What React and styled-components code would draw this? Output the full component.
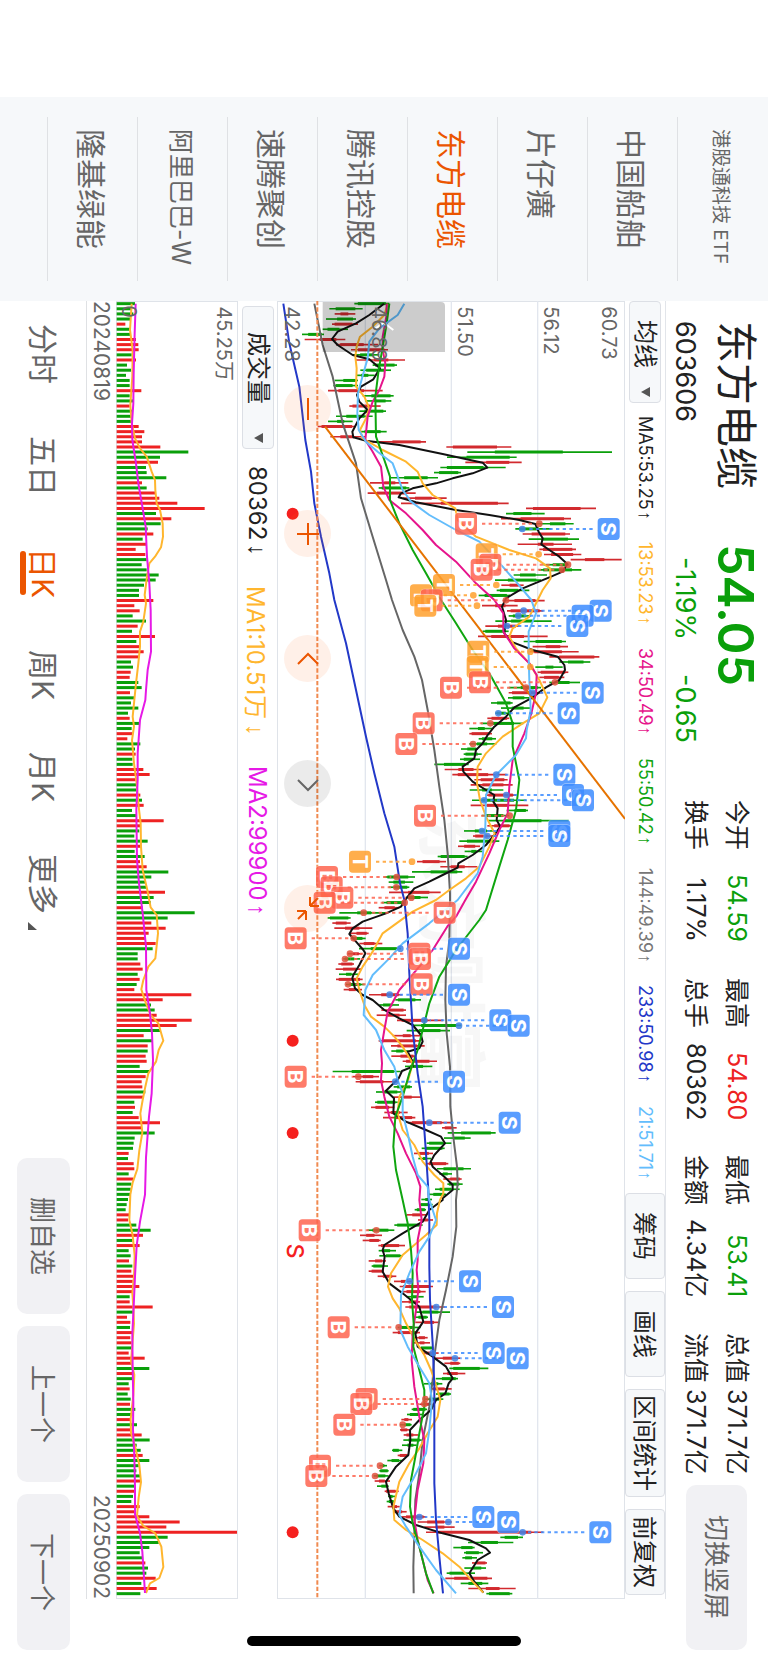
import React, { useState } from 'react'
import styled, { createGlobalStyle, css } from 'styled-components'

const UP = '#ee2222'
const DOWN = '#0a9f0a'
const ORANGE = '#eb5500'

const GlobalStyle = createGlobalStyle`
  * { box-sizing: border-box; }
  body {
    margin: 0;
    background: #fff;
    color: #222;
    font-family: Inter, "Noto Sans CJK SC", sans-serif;
  }
  button, select {
    font-family: inherit;
    writing-mode: inherit;
    text-orientation: inherit;
    margin: 0;
    padding: 0;
  }
`

/* the app is held sideways: inline runs down the screen, blocks run right to left */
const Screen = styled.div`
  position: relative;
  display: flex;
  width: 100vw;
  height: 100vh;
  padding-inline-start: 97px;
  overflow: hidden;
  writing-mode: vertical-rl;
  text-orientation: sideways;
  white-space: nowrap;
`

const WatchList = styled.nav`
  flex: 0 0 204px;
  padding-inline: 20px;
  padding-block-start: 1px;
  background: #f6f8fa;
`

const WatchItem = styled.a`
  display: flex;
  align-items: center;
  block-size: 90px;
  padding-inline-start: 12px;
  border-block-end: 1px solid #dfe1e4;
  color: ${(p) => (p.$active ? ORANGE : '#666')};
  font-size: ${(p) => p.$size || 30}px;
  text-decoration: none;
`

const Main = styled.main`
  display: flex;
  flex-direction: column;
  flex: 1;
  min-inline-size: 0;
`

const Header = styled.header`
  display: flex;
  block-size: 102px;
  padding-inline: 20px 13px;
`

const HeadColumn = styled.div`
  flex: 0 0 ${(p) => p.$size}px;
  display: flex;
  flex-direction: column;
  gap: 8px;
  padding-block-start: 7px;
`

const StockName = styled.h1`
  margin: 0;
  font-size: 42px;
  font-weight: 400;
  line-height: 50px;
`

const Price = styled.div`
  color: ${DOWN};
  font-size: 50px;
  font-weight: 600;
  line-height: 50px;
`

const SubLine = styled.div`
  display: flex;
  gap: 34px;
  padding-inline-start: ${(p) => p.$indent || 0}px;
  color: ${(p) => p.$color || '#222'};
  font-size: 27px;
  line-height: 36px;
`

const Stats = styled.dl`
  flex: 1;
  display: grid;
  grid-template-columns: repeat(4, 1fr);
  grid-auto-rows: 36px;
  gap: 5px 35px;
  align-content: start;
  margin: 0;
  padding-block-start: 13px;
`

const Stat = styled.div`
  display: flex;
  justify-content: space-between;
  font-size: 25px;
  line-height: 36px;
  dd {
    margin: 0;
    color: ${(p) => p.$color || '#222'};
  }
`

const GreyButton = styled.button`
  flex: none;
  inline-size: ${(p) => p.$size}px;
  block-size: ${(p) => p.$block}px;
  padding-block-end: 3px;
  border: 0;
  border-radius: 10px;
  background: #f1f1f4;
  color: #666;
  font-size: 26px;
`

const SwitchButton = styled(GreyButton)`
  margin-block-start: 21px;
  margin-inline-start: 10px;
`

const barFrame = css`
  margin-inline-end: 64px;
  display: flex;
  align-items: center;
`

const AverageBar = styled.div`
  ${barFrame}
  block-size: 41px;
  border-block-start: 1px solid #e2e5ea;
`

const VolumeBar = styled.div`
  ${barFrame}
  block-size: 39px;
  padding-inline-start: 5px;
  font-size: 24px;
`

const Picker = styled.label`
  position: relative;
  flex: none;
  inline-size: ${(p) => p.$size}px;
  block-size: 32px;
  select {
    appearance: none;
    inline-size: 100%;
    block-size: 100%;
    padding-inline-start: ${(p) => p.$pad}px;
    border: 1px solid #dcdfe5;
    border-radius: 4px;
    background: #f6f8fa;
    color: #222;
    font-size: 24px;
    line-height: 30px;
  }
  svg {
    position: absolute;
    inset-block-start: 11px;
    inset-inline-end: 6px;
    width: 9px;
    height: 10px;
    pointer-events: none;
  }
`

const Averages = styled.div`
  flex: 1;
  display: flex;
  justify-content: space-between;
  padding-inline: 13px;
  font-size: 18px;
`

const Average = styled.span`
  color: ${(p) => p.$color};
`

const Arrow = styled.span`
  margin-inline-start: ${(p) => p.$gap || 0}px;
  font-family: "Liberation Sans", sans-serif;
`

const Tools = styled.div`
  display: flex;
  gap: 12px;
  padding-inline-end: 4px;
`

const ToolButton = styled.button`
  min-inline-size: 86px;
  block-size: 40px;
  padding-inline: 5px;
  padding-block-end: 3px;
  border: 1px solid #dcdfe5;
  border-radius: 4px;
  background: #f6f8fa;
  color: #222;
  font-size: 24px;
`

const VolumeText = styled.span`
  margin-inline-start: ${(p) => p.$gap}px;
  color: ${(p) => p.$color};
`

const Panel = styled.section`
  position: relative;
  block-size: ${(p) => p.$block}px;
  margin-inline-end: 64px;
  border: 1px solid #dfe3e9;
  > svg {
    position: absolute;
    inset: -1px;
    width: calc(100% + 2px);
    height: calc(100% + 2px);
    writing-mode: horizontal-tb;
    text-orientation: mixed;
  }
`

const ChartControls = styled.div`
  position: absolute;
  inset-block-end: 6px;
  inset-inline-start: 83px;
  display: flex;
  gap: 78px;
`

const RoundButton = styled.button`
  display: flex;
  align-items: center;
  justify-content: center;
  inline-size: 47px;
  block-size: 47px;
  border: 0;
  border-radius: 50%;
  background: ${(p) => (p.$muted ? 'rgba(0, 0, 0, 0.08)' : 'rgba(255, 110, 30, 0.1)')};
  svg {
    width: 24px;
    height: 24px;
    fill: none;
    stroke: ${(p) => (p.$muted ? '#666' : ORANGE)};
    stroke-width: 2;
  }
`

const Dates = styled.div`
  display: flex;
  justify-content: space-between;
  align-items: center;
  block-size: 30px;
  margin-inline-end: 64px;
  border-block-end: 1px solid #dfe1e4;
  color: #666;
  font-size: 21px;
`

const Footer = styled.footer`
  flex: 1;
  display: flex;
  align-items: center;
  justify-content: space-between;
  padding-inline: 23px 13px;
`

const Periods = styled.div`
  display: flex;
  gap: 52px;
`

const Period = styled.button`
  position: relative;
  border: 0;
  background: none;
  color: ${(p) => (p.$active ? ORANGE : '#666')};
  font-size: 30px;
  line-height: 34px;
  ${(p) => p.$active && css`
    &::after {
      content: '';
      position: absolute;
      inset-block-end: -6px;
      inset-inline: 3px;
      block-size: 6px;
      border-radius: 3px;
      background: ${ORANGE};
    }
  `}
  svg {
    position: absolute;
    inset-block-end: 2px;
    inset-inline-end: -16px;
    width: 9px;
    height: 8px;
  }
`

const FooterActions = styled.div`
  display: flex;
  gap: 12px;
`

const HomeIndicator = styled.div`
  position: absolute;
  inset-inline-end: 17px;
  inset-block: 247px;
  inline-size: 10px;
  border-radius: 5px;
  background: #000;
`

const WATCH = [
  ['港股通科技 ETF', 19], ['中国船舶'], ['片仔癀'], ['东方电缆'],
  ['腾讯控股'], ['速腾聚创'], ['阿里巴巴-W', 25], ['隆基绿能'],
]

const STATS = [
  ['今开', '54.59', DOWN], ['最高', '54.80', UP], ['最低', '53.41', DOWN], ['总值', '371.7亿'],
  ['换手', '1.17%'], ['总手', '80362'], ['金额', '4.34亿'], ['流值', '371.7亿'],
]

const AVERAGES = [
  ['MA5:53.25', '#222'], ['13:53.23', '#ffb62e'], ['34:50.49', '#e6148c'], ['55:50.42', '#0fa50f'],
  ['144:49.39', '#777'], ['233:50.98', '#2238c8'], ['21:51.71', '#63bdfc'],
]

// chart units are a third of a pixel; rows are one trading day apart
const TOP = 903
const LENGTH = 3894
const dayY = (i) => 911 + i * 15.357

const CANDLES = `
g295-400 g220-320 r236-298 g210-300 r228-306 g200-276 g138-204 r146-268 r240-366 r285-396
g290-370 r300-447 g350-423 g313-405 g300-356 g236-306 g232-306 r216-380 g320-413 g328-406
r280-374 g310-390 g240-350 g216-290 r185-300 g310-392 r223-330 r350-510 r571-766 g634-1068
g573-782 r628-797 g553-749 g534-615 g405-546 r342-457 g368-460 r335-479 r440-572 r435-758
r810-1020 g750-866 r735-945 g840-953 g778-886 r800-942 g818-969 r785-948 r850-960 r864-976
r944-1097 g862-938 g849-976 g773-873 g717-855 r736-803 g722-820 g668-762 r740-866 r678-785
r753-862 g758-824 g718-887 r688-790 g680-758 r666-875 g803-930 r830-936 r820-968 r880-1030
g910-1003 g838-920 r845-937 r850-925 g880-972 g758-855 r758-860 g756-830 g705-770 g735-822
g718-765 r694-760 g675-802 g640-710 r640-708 g668-720 g640-721 g615-666 g623-677 g612-672
g535-638 r566-677 r589-752 r655-755 r644-770 g641-742 r688-780 g648-810 r644-817 g752-816
g678-760 g698-938 r694-768 g624-712 r651-718 g610-730 r606-672 g626-680 g545-635 r483-570
r553-664 g468-619 g385-477 g398-472 g398-460 r399-554 g450-516 g378-450 r368-430 g250-395
g215-284 r229-284 r235-349 r280-338 g285-329 r310-379 g309-435 r275-318 g262-312 r247-294
r239-318 g249-306 r240-320 g270-326 r263-318 r339-438 g418-495 g370-429 r376-450 r362-450
r423-561 g467-616 g452-582 r410-492 r368-492 r405-506 g406-458 r406-480 r440-543 g447-529
g230-434 r291-369 r299-425 g413-468 g360-442 r413-495 g357-425 r345-415 r385-455 r381-478
r455-586 r558-602 g575-719 g564-644 g512-586 g497-566 r474-531 g487-525 r512-577 g543-645
g550-588 r562-617 g574-620 g537-611 g517-570 g496-528 g490-530 g476-510 r452-512 r486-531
g415-500 g334-415 r312-378 r320-374 r367-447 g368-420 g370-440 r338-390 g347-396 r338-384
r365-421 r414-470 r431-531 r438-509 g452-503 r438-492 r448-568 g480-582 g476-516 r478-550
g425-494 r410-492 r478-515 r473-522 g490-532 r500-548 r540-613 r565-613 g580-697 r561-628
g539-606 g504-559 r525-587 g540-585 g505-562 r490-535 g467-513 g453-498 r436-468 g432-467
r432-460 r443-487 g442-497 g438-482 g408-439 r425-458 g394-439 g370-393 g370-398 g353-398
r356-402 g363-398 r386-428 g396-417 g392-415 r395-431 r412-452 r436-510 r485-587 r505-596
r510-861 g733-801 g636-772 g592-656 g624-681 g619-663 r648-693 g625-690 g572-657 r568-708
g614-697 r637-779 g691-769`.trim().split(/\s+/).map((s) => {
  const [low, high] = s.slice(1).split('-').map(Number)
  return { up: s[0] === 'r', low, high }
})

const VOLUMES = `
g405 g395 g400 g393 r376 g390 g390 r408 r415 r416 g395 r408 g381 g393 g378 g389 g389 r424 g389 g399
r389 g397 g395 g397 r416 r433 r426 r426 r481 g565 g480 r474 g438 g440 g499 r426 g440 r468 r478 r532
r614 g468 r514 g482 g443 r460 g428 r440 r407 r436 g440 g425 g440 g476 g467 g432 g417 g417 r460 r403
r419 g398 g438 r413 g396 r465 g409 r420 r431 r418 g393 g399 r392 r389 g415 g425 r390 g402 g393 g415
g384 r389 g420 g395 r398 r382 g421 g405 r407 g397 g398 r430 r449 r407 g410 g410 r421 g426 r431 g396
g408 r491 r420 g418 g403 g443 r424 g404 g434 r420 r440 g505 g454 g438 g438 r495 g461 g452 r428 g584
g503 r454 r497 r446 r437 r467 g458 g413 g413 r421 r428 g413 r419 g410 r403 r574 r488 g453 g464 r470
r575 r530 g483 r431 g458 r443 g443 r437 r440 g419 g448 r437 r425 r427 g436 r432 g403 r405 g398 r416
r480 r424 g464 g404 g401 g399 r386 g384 r401 r403 g386 r400 g394 g392 g392 g384 g380 g377 r388 r384
g409 g452 r429 g397 r419 g386 g392 r387 g397 r394 r400 r398 r418 r396 g389 r389 r458 g401 r381 r391
g390 r398 r391 r395 g396 r386 r434 r396 g448 r399 g398 g386 r389 g383 g392 r390 g406 g397 r392 g411
r393 r425 g449 g410 g422 r428 g448 g416 g409 g420 r420 g404 r404 g399 g394 r419 r407 r448 r539 r499
r711 g503 g476 g448 g419 g427 r436 g444 g439 r467 g424 r470 g421`.trim().split(/\s+/).map((s) => ({
  up: s[0] === 'r', end: Number(s.slice(1)),
}))

// every line is stored in screenfuls: the start of the screenful, then x,y pairs
const toPoints = (parts) => parts.map(([start, text, scale = 1]) => text.trim().split(/\s+/).map((pair) => {
  const [x, y] = pair.split(',').map(Number)
  return `${x},${Math.round(start + y * scale)}`
}).join(' ')).join(' ')

const LINES = [
  ['#666', [
    [870, '175,41 200,165 230,260 260,400 300,520 315,625 350,740 390,870'],
    [1800, '408,0 440,90 475,170 498,240 515,330 535,450 550,560 565,660 575,760 582,880'],
    [2700, '582,0 580,120 570,200 568,300 572,400 582,500 583,620 593,720 603,800 605,850'],
    [3600, '600,0 601,80 590,170 570,270 550,360 535,470 530,540 520,620 500,720 490,820 478,900 475,1000 472,1100 473,1180'],
  ]],
  ['#111', [
    [870, '384,41 340,75 300,100 245,125 228,147 245,165 290,195 340,208 372,235 352,268 315,290 303,315 310,335 335,360 310,385 289,425 292,442 330,452 430,465 560,492 680,518 694,533 650,550 590,565 540,580 470,595 435,610 428,622 480,637 600,660 700,675 790,690 838,702 848,725 860,745 856,763 880,780 910,800 934,822 920,845 880,862 800,895 750,925'],
    [1800, '738,20 750,60 745,100 765,125 830,150 905,170 925,195 927,210 910,240 870,262 825,295 775,322 750,350 715,380 695,405 680,430 660,450 655,475 620,500 622,515 650,545 690,570 715,585 712,605 725,625 722,660 733,680 715,705 690,735 650,765 607,790 605,803 560,825 520,845 475,865 455,890'],
    [2700, '448,0 435,20 390,40 320,65 290,85 280,102 300,125 322,150 328,160 310,195 292,225 289,235 297,265 320,285 350,300 385,330 430,355 470,375 495,405 500,425 490,445 455,455 470,485 470,500 438,513 428,535 390,572 414,595 412,640 450,665 510,690 555,710 567,730 535,765 524,785 530,800 570,835 590,855 590,870 560,895'],
    [3600, '560,0 520,30 500,65 440,100 385,135 380,150 386,170 380,215 400,250 440,280 490,320 502,365 478,400 485,440 530,470 570,500 590,535 578,550 568,580 540,600 525,630 490,660 462,690 463,720 457,765 420,800 390,845 398,880 412,925 430,950 480,975 560,1000 640,1020 690,1045 702,1058 665,1080 640,1120 655,1145 682,1178'],
  ]],
  ['#ffb62e', [
    [870, '395,41 385,75 350,110 312,140 302,170 298,200 302,235 300,290 325,320 340,355 330,385 312,420 320,445 380,480 450,515 485,545 500,580 530,615 598,655 605,690 660,740 760,780 840,805 882,835 884,865 860,900'],
    [1800, '845,0 820,50 770,85 760,110 780,145 820,190 850,240 874,292 850,340 800,370 740,410 690,460 665,500 663,550 672,600 690,650 716,700 700,740 670,800 630,835 580,870'],
    [2700, '540,0 470,35 380,100 350,155 320,200 302,235 310,270 325,315 345,350 385,380 415,410 440,440 470,490 455,545 430,590 425,640 440,690 475,735 500,785 535,825 562,850 562,880'],
    [3600, '552,0 543,40 542,75 510,105 440,165 405,220 396,260 410,295 430,325 450,370 480,425 505,465 525,510 540,555 553,600 545,650 515,700 490,745 460,790 430,845 412,920 415,960 450,990 500,1020 560,1060 610,1100 650,1145 682,1178'],
  ]],
  ['#e6148c', [
    [870, '392,41 392,75 380,140 380,180 388,220 385,260 370,300 350,335 335,380 328,450 350,485 375,530 382,590 400,630 450,670 500,720 540,765 600,815 660,880'],
    [1800, '715,0 742,40 742,95 775,145 820,190 842,225 840,280 826,340 805,400 770,480 760,560 755,640 730,690 700,760 660,845'],
    [2700, '628,0 600,50 575,78 530,150 490,200 430,270 395,335 385,390 375,450 378,490 375,540 385,590 400,650 425,700 450,760 480,820 493,860'],
    [3600, '490,0 497,60 485,120 485,180 482,210 487,270 480,330 470,400 467,480 475,560 490,650 505,720 502,790 485,870 475,960 485,1020 500,1080 515,1140 533,1180'],
  ]],
  ['#0fa50f', [
    [870, '400,41 392,100 382,160 368,240 358,320 360,440 385,510 402,560 402,630 430,700 470,780 510,850'],
    [1800, '555,0 600,70 650,150 700,220 750,310 770,370 770,440 790,540 780,630 755,720 730,800 690,930'],
    [2700, '670,60 600,150 550,230 520,310 500,390 485,450 460,520 440,590 418,650 412,740 420,810'],
    [3600, '440,0 455,70 465,150 470,220 468,300 473,370 472,440 490,510 505,570 505,620 490,700 480,760 465,840 462,920 470,970 490,1040 510,1120 532,1180'],
  ]],
  ['#2238c8', [
    [870, '82,41 100,160 130,290 148,450 165,545 175,640 195,740 220,850'],
    [1800, '235,0 270,130 300,270 330,410 355,520 385,640 415,740 432,850'],
    [2700, '445,0 455,100 460,220 470,390 485,520 500,620 510,760 517,870'],
    [3600, '518,0 520,60 520,200 522,300 530,430 535,560 535,700 535,850 540,960 550,1070 561,1180'],
  ]],
  ['#63bdfc', [
    [870, '445,41 425,75 370,115 340,155 335,205 318,265 306,310 304,370 308,420 330,455 365,485 410,520 425,560 440,600 465,635 520,675 600,720 670,755 740,830 780,875'],
    [1800, '826,0 840,40 818,95 818,170 820,240 824,330 812,390 810,415 780,465 720,525 690,585 688,680 680,770 665,820'],
    [2700, '605,0 520,70 440,130 400,175 350,225 328,270 323,345 360,390 385,450 415,500 425,540 440,580 440,640 455,700 470,770 485,825 515,860'],
    [3600, '520,0 540,60 520,110 490,155 460,220 435,285 433,390 455,440 490,500 520,550 528,600 520,690 510,760 470,840 440,890 430,945 450,980 490,1040 540,1110 600,1180'],
  ]],
]

const VOLUME_LINES = [
  ['#ffb62e', [
    [870, '395,41 390,120 398,180 397,260 391,345 395,400 405,445 420,475 440,500 455,545 465,570 466,600 470,640 480,660 488,700 489,740 483,772 465,800 448,820 441,860 434,915 438,940 430,995 420,1025 420,1070 415,1120 408,1180'],
    [2100, '403,0 398,50 402,80 396,120 402,190 410,250 416,320 422,370 423,440 428,510 442,570 452,622 470,645 474,700 466,775 445,800 430,840 424,868 436,905 452,945 475,970 490,1022 476,1050 468,1085 445,1120 436,1160 428,1200 421,1240'],
    [3390, '427,8 418,60 412,115 398,155 391,190 388,265 398,310 404,370 402,430 397,480 400,520 402,570 398,620 393,680 403,720 400,780 392,850 393,890 405,930 418,985 423,1035 416,1080 411,1135 430,1165 465,1185 484,1225 490,1285 478,1318 450,1333 438,1362', 1.02],
  ]],
  ['#e619e6', [
    [870, '407,41 404,130 401,250 400,340 396,400 397,450 408,520 415,580 428,655 437,710 441,800 448,880 452,960 453,1085 443,1140 438,1200'],
    [2100, '436,0 420,60 413,160 413,240 409,330 411,480 417,550 428,640 438,740 439,870 450,940 456,1000 459,1080 455,1180 447,1250'],
    [3390, '444,0 438,80 435,190 420,270 410,340 405,430 401,520 397,600 398,700 400,800 399,880 403,960 405,1050 405,1130 420,1185 427,1240 435,1362', 1.02],
  ]],
]

// kind, tag position, day, price dot
const TRADES = [
  ['S', 1058, 1587, 799], ['B', 630, 1571, 850], ['T', 692, 1663, 848], ['B', 703, 1694, 936],
  ['B', 677, 1709, 918], ['T', 564, 1755, 721], ['T', 495, 1786, 652], ['B', 527, 1801, 750],
  ['T', 508, 1817, 663], ['S', 1034, 1832, 803], ['S', 980, 1847, 787], ['S', 964, 1878, 753],
  ['T', 667, 1955, 823], ['T', 665, 2001, 823], ['B', 672, 2047, 897], ['B', 585, 2063, 810],
  ['S', 1010, 2078, 829], ['S', 938, 2140, 727], ['B', 503, 2170, 703], ['B', 451, 2232, 651],
  ['S', 925, 2324, 721], ['S', 951, 2385, 751], ['S', 981, 2401, 684], ['B', 507, 2447, 761],
  ['S', 910, 2493, 678], ['S', 910, 2508, 694], ['T', 312, 2585, 468], ['B', 213, 2631, 422],
  ['B', 227, 2662, 421], ['B', 259, 2693, 466], ['B', 206, 2708, 446], ['B', 566, 2738, 323],
  ['B', 119, 2815, 293], ['S', 609, 2846, 433], ['B', 490, 2861, 282], ['B', 492, 2877, 267],
  ['B', 497, 2953, 276], ['S', 609, 2984, 401], ['S', 733, 3061, 505], ['S', 788, 3077, 609],
  ['B', 119, 3230, 307], ['S', 594, 3245, 418], ['S', 761, 3368, 520], ['B', 161, 3691, 361],
  ['S', 642, 3844, 461], ['S', 741, 3921, 541], ['B', 248, 3982, 428], ['S', 713, 4059, 530],
  ['S', 785, 4075, 597], ['B', 332, 4197, 508], ['B', 316, 4212, 505], ['B', 265, 4274, 440],
  ['B', 192, 4397, 372], ['B', 181, 4428, 357], ['S', 682, 4551, 490], ['S', 757, 4566, 577],
  ['S', 1033, 4597, 800],
]

const TAG_COLORS = { B: '#fe6450', S: '#3d8cff', T: '#ffa02d' }
const DOT_COLORS = { B: '#e0503c', S: '#3f82e6', T: '#ffa02d' }

function SideText({ x, y, size = 60, color = '#666', anchor = 'start', weight = 400, children }) {
  return (
    <text transform={`translate(${x} ${y}) rotate(90)`} fontSize={size} fill={color} textAnchor={anchor} fontWeight={weight}>
      {children}
    </text>
  )
}

function Trade({ kind, x, y, dot }) {
  const dir = dot > x ? 1 : -1
  return (
    <g>
      <line x1={x + dir * 48} x2={dot - dir * 16} y1={y} y2={y} stroke={TAG_COLORS[kind]} strokeWidth="6" strokeDasharray="10 10" opacity="0.85" />
      <circle cx={dot} cy={y} r="10" fill={DOT_COLORS[kind]} opacity="0.85" />
      <g opacity="0.85">
        <rect x={x - 35} y={y - 35} width="70" height="70" rx="13" fill="#fff" opacity="0.5" />
        <rect x={x - 33} y={y - 33} width="66" height="66" rx="11" fill={TAG_COLORS[kind]} />
        <SideText x={x - 22} y={y} size={62} color="#fff" anchor="middle" weight={700}>{kind}</SideText>
      </g>
    </g>
  )
}

function PriceChart() {
  return (
    <svg viewBox={`63 ${TOP} 1044 ${LENGTH}`} preserveAspectRatio="none">
      {[328, 586, 845].map((x) => (
        <line key={x} x1={x} x2={x} y1={TOP} y2={TOP + LENGTH} stroke="#e2e6ee" strokeWidth="4" />
      ))}
      <SideText x={506} y={2436} size={210} color="rgba(0, 0, 0, 0.03)" weight={700}>东方财富</SideText>
      {CANDLES.map(({ up, low, high }, i) => {
        const size = high - low
        const color = up ? '#d22a2e' : DOWN
        return (
          <g key={i} stroke={color}>
            <line x1={low} x2={high} y1={dayY(i)} y2={dayY(i)} strokeWidth="5" />
            <line x1={low + size * (0.1 + (i % 4) * 0.09)} x2={high - size * (0.1 + (i % 3) * 0.12)} y1={dayY(i)} y2={dayY(i)} strokeWidth="9" />
          </g>
        )
      })}
      {LINES.map(([color, parts]) => (
        <polyline key={color} points={toPoints(parts)} fill="none" stroke={color} strokeWidth="6" strokeLinejoin="round" />
      ))}
      <line x1="207" y1="1280" x2="1107" y2="2457" stroke="#e67300" strokeWidth="6" />
      <path d="M200 906h355q12 0 12 12v138H200z" fill="rgba(0, 0, 0, 0.2)" />
      <path d="M355 988l28-20 29 22" fill="none" stroke="#fff" strokeWidth="6" />
      <line x1="184" x2="184" y1={TOP} y2={TOP + LENGTH} stroke="#f08a50" strokeWidth="6" strokeDasharray="13 6" />
      {TRADES.map(([kind, x, y, dot], i) => <Trade key={i} kind={kind} x={x} y={y} dot={dot} />)}
      {[1541, 3122, 3399, 4597].map((y) => <circle key={y} cx="110" cy={y} r="18" fill="#f5201e" />)}
      <SideText x={94} y={3753} size={70} color="#f5201e" anchor="middle" weight={500}>S</SideText>
      {[[1039, '60.73'], [865, '56.12'], [605, '51.50'], [349, '46.89'], [88, '42.28']].map(([x, label]) => (
        <SideText key={x} x={x} y={919}>{label}</SideText>
      ))}
    </svg>
  )
}

function VolumeChart() {
  return (
    <svg viewBox={`348 ${TOP} 366 ${LENGTH}`} preserveAspectRatio="none">
      {VOLUMES.map(({ up, end }, i) => (
        <line key={i} x1="350" x2={end} y1={dayY(i)} y2={dayY(i)} stroke={up ? UP : DOWN} strokeWidth="9" />
      ))}
      {VOLUME_LINES.map(([color, parts]) => (
        <polyline key={color} points={toPoints(parts)} fill="none" stroke={color} strokeWidth="6" strokeLinejoin="round" />
      ))}
      <SideText x={652} y={919}>45.25万</SideText>
      <SideText x={366} y={916}>0</SideText>
    </svg>
  )
}

const Caret = () => <svg viewBox="0 0 9 10"><path d="M9 0v10L0 5z" fill="#555" /></svg>

const CONTROLS = [
  ['缩小', 'M12 1v22'],
  ['放大', 'M12 1v22M1 12h22'],
  ['左移', 'M2 17L12 7l10 10'],
  ['右移', 'M2 8l10 10L22 8'],
  ['还原', 'M14 9h9M14 9V0M14 9l8-8M10 14H1M10 14v9M10 14l-8 8'],
]

export default function App() {
  const [period, setPeriod] = useState('日K')

  return (
    <Screen>
      <GlobalStyle />
      <WatchList>
        {WATCH.map(([name, size]) => (
          <WatchItem key={name} href="#" $size={size} $active={name === '东方电缆'}>{name}</WatchItem>
        ))}
      </WatchList>

      <Main>
        <Header>
          <HeadColumn $size={223}>
            <StockName>东方电缆</StockName>
            <SubLine>603606</SubLine>
          </HeadColumn>
          <HeadColumn $size={256}>
            <Price>54.05</Price>
            <SubLine $indent={13} $color={DOWN}><span>-1.19%</span><span>-0.65</span></SubLine>
          </HeadColumn>
          <Stats>
            {STATS.map(([label, value, color]) => (
              <Stat key={label} $color={color}><dt>{label}</dt><dd>{value}</dd></Stat>
            ))}
          </Stats>
          <SwitchButton $size={165} $block={61}>切换竖屏</SwitchButton>
        </Header>

        <AverageBar>
          <Picker $size={102} $pad={18}>
            <select aria-label="主图指标"><option>均线</option></select>
            <Caret />
          </Picker>
          <Averages>
            {AVERAGES.map(([text, color]) => (
              <Average key={text} $color={color}>{text}<Arrow $gap={1}>↑</Arrow></Average>
            ))}
          </Averages>
          <Tools>
            {['筹码', '画线', '区间统计', '前复权'].map((t) => <ToolButton key={t}>{t}</ToolButton>)}
          </Tools>
        </AverageBar>

        <Panel $block={348}>
          <PriceChart />
          <ChartControls>
            {CONTROLS.map(([label, d]) => (
              <RoundButton key={label} aria-label={label} $muted={label === '右移'}>
                <svg viewBox="0 0 24 24"><path d={d} /></svg>
              </RoundButton>
            ))}
          </ChartControls>
        </Panel>

        <VolumeBar>
          <Picker $size={143} $pad={25}>
            <select aria-label="副图指标"><option>成交量</option></select>
            <Caret />
          </Picker>
          <VolumeText $gap={17} $color="#222">80362<Arrow $gap={4}>↓</Arrow></VolumeText>
          <VolumeText $gap={30} $color="#ffb62e">MA1:10.51万<Arrow $gap={4}>↓</Arrow></VolumeText>
          <VolumeText $gap={30} $color="#e619e6">MA2:99900<Arrow $gap={4}>↑</Arrow></VolumeText>
        </VolumeBar>

        <Panel $block={122}>
          <VolumeChart />
        </Panel>

        <Dates><span>20240819</span><span>20250902</span></Dates>

        <Footer>
          <Periods>
            {['分时', '五日', '日K', '周K', '月K', '更多'].map((p) => (
              <Period key={p} $active={p === period} onClick={() => setPeriod(p)}>
                {p}
                {p === '更多' && <svg viewBox="0 0 9 8"><path d="M0 0v8h9z" fill="#555" /></svg>}
              </Period>
            ))}
          </Periods>
          <FooterActions>
            {['删自选', '上一个', '下一个'].map((t) => <GreyButton key={t} $size={156} $block={53}>{t}</GreyButton>)}
          </FooterActions>
        </Footer>
      </Main>
      <HomeIndicator />
    </Screen>
  )
}
